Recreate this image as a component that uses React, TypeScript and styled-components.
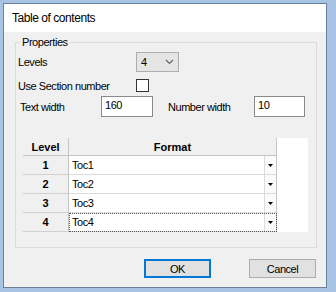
import { Fragment } from 'react';
import styled, { createGlobalStyle } from 'styled-components';

const GlobalStyle = createGlobalStyle`
  html, body {
    margin: 0;
    padding: 0;
    background: #a7c4e5;
    font-family: "Liberation Sans", Arial, sans-serif;
  }
`;

const Window = styled.div`
  box-sizing: border-box;
  margin: 3px 0 0 3px;
  width: 324px;
  height: 285px;
  border: 1px solid #6d8099;
  display: flex;
  flex-direction: column;
  background: #f0f0f0;
`;

const TitleBar = styled.div`
  height: 28px;
  flex: none;
  background: #ffffff;
  display: flex;
  align-items: center;
  padding-left: 8px;
  font-size: 12px;
  letter-spacing: -0.45px;
  color: #000;
`;

const Content = styled.div`
  flex: 1;
  display: flex;
  flex-direction: column;
  font-size: 11px;
  letter-spacing: -0.45px;
  color: #000;
`;

const GroupBox = styled.fieldset`
  margin: 4px 9px 0 11px;
  padding: 4px 0 15px 2px;
  border: 1px solid #dcdcdc;
  min-width: 0;
  display: flex;
  flex-direction: column;
`;

const Legend = styled.legend`
  margin-left: 2px;
  padding: 0 2px;
  line-height: 12px;
  font-size: 11px;
`;

const Row = styled.div<{ $h: number; $mt?: number }>`
  display: flex;
  align-items: center;
  height: ${({ $h }) => $h}px;
  margin-top: ${({ $mt }) => $mt ?? 0}px;
`;

const Label = styled.span<{ $w: number; $indent?: number; $ml?: number }>`
  box-sizing: border-box;
  width: ${({ $w }) => $w}px;
  padding-left: ${({ $indent }) => $indent ?? 0}px;
  margin-left: ${({ $ml }) => $ml ?? 0}px;
  white-space: nowrap;
`;

const Select = styled.div`
  box-sizing: border-box;
  width: 43px;
  height: 20px;
  border: 1px solid #adadad;
  background: #e5e5e5;
  display: flex;
  align-items: center;
  justify-content: space-between;
  padding: 0 4px 0 4px;
`;

const Checkbox = styled.div`
  box-sizing: border-box;
  width: 13px;
  height: 13px;
  border: 1px solid #333333;
  background: #ffffff;
`;

const TextBox = styled.div<{ $w: number }>`
  box-sizing: border-box;
  width: ${({ $w }) => $w}px;
  height: 21px;
  align-self: flex-start;
  border: 1px solid #8a8a8a;
  background: #ffffff;
  padding: 2px 0 0 3px;
`;

const Grid = styled.div`
  margin: 21px 0 0 5px;
  width: 285px;
  height: 94px;
  background: #ffffff;
  display: grid;
  grid-template-columns: 46px 208px;
  grid-template-rows: 18px repeat(4, 19px);
  align-content: start;
`;

const HeadCell = styled.div`
  box-sizing: border-box;
  background: #f0f0f0;
  border-right: 1px solid #c4c4c4;
  border-bottom: 1px solid #c4c4c4;
  display: flex;
  align-items: center;
  justify-content: center;
  font-weight: bold;
  letter-spacing: 0;
`;

const LevelCell = styled(HeadCell)`
  border-bottom-color: #d0d0d0;
`;

const FormatCell = styled.div<{ $focused?: boolean }>`
  box-sizing: border-box;
  background: #ffffff;
  border-right: 1px solid #c4c4c4;
  border-bottom: 1px solid #dcdcdc;
  display: flex;
  align-items: center;
  padding-left: 3px;
  outline: ${({ $focused }) => ($focused ? '1px dotted #555' : 'none')};
  outline-offset: -1px;
`;

const DropButton = styled.div`
  margin-left: auto;
  width: 12px;
  height: 100%;
  box-sizing: border-box;
  border-left: 1px solid #dcdcdc;
  background: #fbfbfb;
  display: flex;
  align-items: center;
  justify-content: center;
`;

const ButtonRow = styled.div`
  display: flex;
  justify-content: flex-end;
  gap: 38px;
  padding: 0 10px 0 0;
  margin-top: 11px;
`;

const Button = styled.div<{ $default?: boolean }>`
  box-sizing: border-box;
  width: 67px;
  height: 19px;
  background: #e1e1e1;
  border: ${({ $default }) => ($default ? '2px solid #0078d7' : '1px solid #adadad')};
  display: flex;
  align-items: center;
  justify-content: center;
`;

const levels = ['Toc1', 'Toc2', 'Toc3', 'Toc4'];

function Chevron() {
  return (
    <svg width="9" height="6" viewBox="0 0 9 6">
      <polyline points="1,1 4.5,4.5 8,1" fill="none" stroke="#606060" strokeWidth="1.1" />
    </svg>
  );
}

function Arrow() {
  return (
    <svg width="5" height="3" viewBox="0 0 5 3">
      <polygon points="0,0 5,0 2.5,3" fill="#000" />
    </svg>
  );
}

export default function App() {
  return (
    <>
      <GlobalStyle />
      <Window>
        <TitleBar>Table of contents</TitleBar>
        <Content>
          <GroupBox>
            <Legend>Properties</Legend>
            <Row $h={20}>
              <Label $w={118}>Levels</Label>
              <Select>
                <span>4</span>
                <Chevron />
              </Select>
            </Row>
            <Row $h={13} $mt={7}>
              <Label $w={118}>Use Section number</Label>
              <Checkbox />
            </Row>
            <Row $h={21} $mt={4}>
              <Label $w={83} $indent={2}>Text width</Label>
              <TextBox $w={52}>160</TextBox>
              <Label $w={86} $ml={15}>Number width</Label>
              <TextBox $w={51}>10</TextBox>
            </Row>
            <Grid>
              <HeadCell>Level</HeadCell>
              <HeadCell>Format</HeadCell>
              {levels.map((name, i) => (
                <Fragment key={name}>
                  <LevelCell>{i + 1}</LevelCell>
                  <FormatCell $focused={i === 3}>
                    {name}
                    <DropButton>
                      <Arrow />
                    </DropButton>
                  </FormatCell>
                </Fragment>
              ))}
            </Grid>
          </GroupBox>
          <ButtonRow>
            <Button $default>OK</Button>
            <Button>Cancel</Button>
          </ButtonRow>
        </Content>
      </Window>
    </>
  );
}
